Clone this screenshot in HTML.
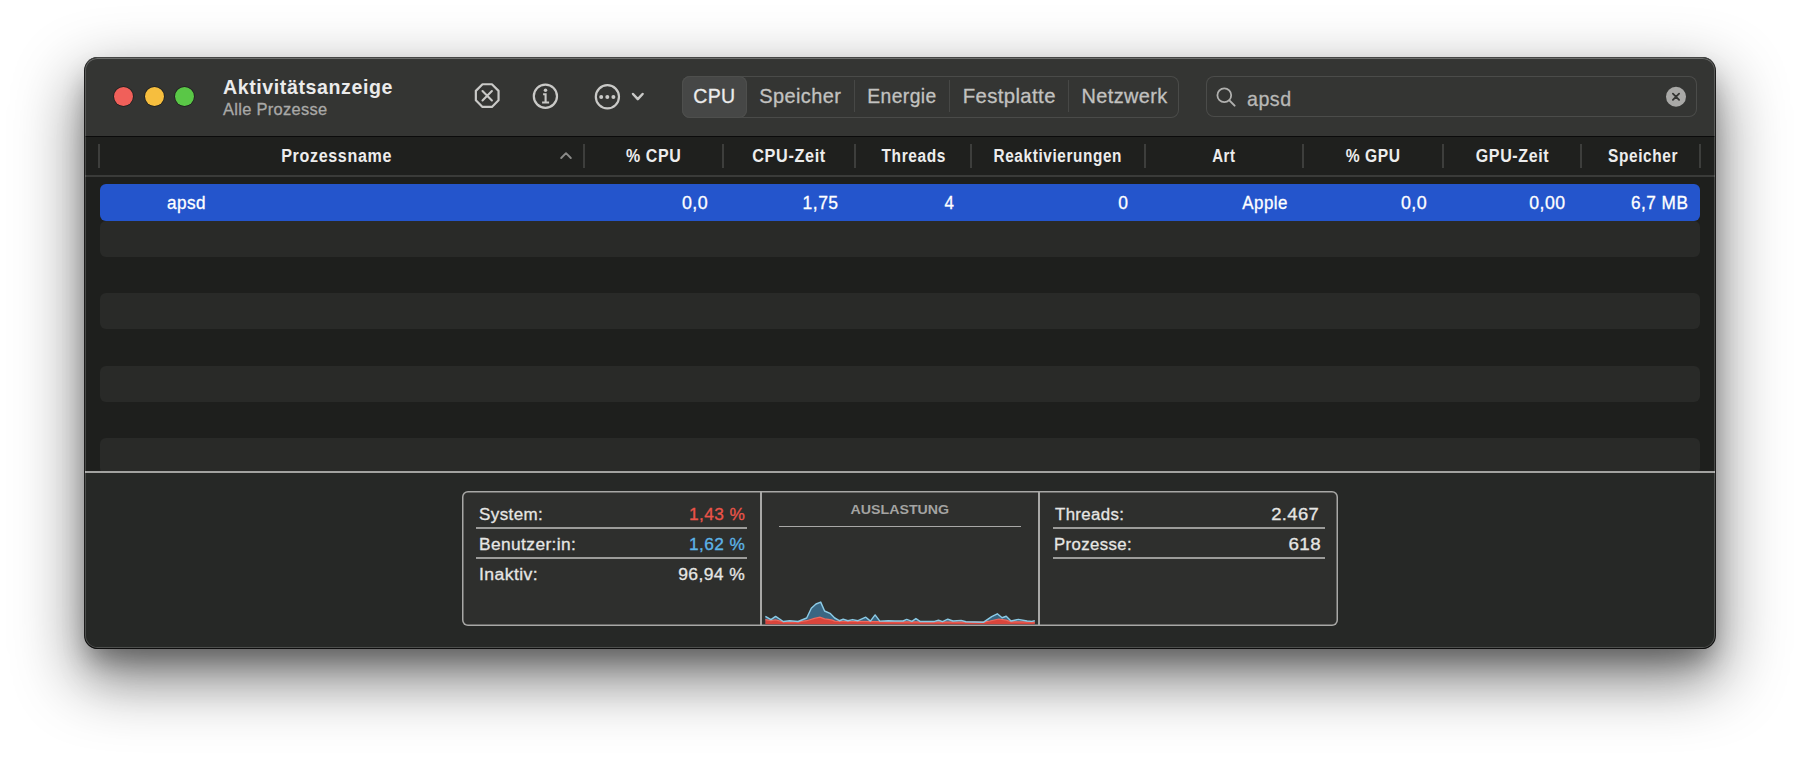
<!DOCTYPE html>
<html><head><meta charset="utf-8"><style>
*{box-sizing:border-box;margin:0;padding:0}
html,body{width:1800px;height:760px;overflow:hidden;background:#ffffff}
body{font-family:"Liberation Sans",sans-serif;position:relative}
.b,.t,svg{position:absolute}
.t{white-space:nowrap;line-height:1}
.r{-webkit-text-stroke:0.3px currentColor}
#win{position:absolute;left:85px;top:58px;width:1630px;height:590px;border-radius:12.5px;background:#262725;
 box-shadow:0 -1px 0 0 #454645, 0 1px 0 0 #0e0e0e, 0 0 0 1px #1c1c1c, 0 26px 64px 8px rgba(0,0,0,0.42), 0 14px 26px -4px rgba(0,0,0,0.3), 0 36px 44px -12px rgba(0,0,0,0.16);overflow:hidden}
#inner{left:0;top:0;width:1630px;height:590px;border-radius:12.5px;box-shadow:inset 0 0 0 1px rgba(255,255,255,0.19), inset 0 1px 0 rgba(255,255,255,0.12);}
</style></head><body>
<div id="win">
<div class="b" style="left:0.00px;top:0.00px;width:1630.00px;height:78.00px;background:#343533;"></div>
<div class="b" style="left:0.00px;top:78.00px;width:1630.00px;height:1.00px;background:#0b0b0b;"></div>
<div class="b" style="left:0.00px;top:79.00px;width:1630.00px;height:38.00px;background:#1f201e;"></div>
<div class="b" style="left:0.00px;top:117.00px;width:1630.00px;height:2.00px;background:#3a3b39;"></div>
<div class="b" style="left:0.00px;top:119.00px;width:1630.00px;height:294.00px;background:#1e1f1d;overflow:hidden"><div class="b" style="left:15.00px;top:7.00px;width:1600.00px;height:36.50px;background:#2455cc;border-radius:6px;"></div><div class="b" style="left:15.00px;top:43.50px;width:1600.00px;height:36.25px;background:#292a28;border-radius:6px;"></div><div class="b" style="left:15.00px;top:116.00px;width:1600.00px;height:36.25px;background:#292a28;border-radius:6px;"></div><div class="b" style="left:15.00px;top:188.50px;width:1600.00px;height:36.25px;background:#292a28;border-radius:6px;"></div><div class="b" style="left:15.00px;top:261.00px;width:1600.00px;height:36.25px;background:#292a28;border-radius:6px;"></div></div>
<div class="b" style="left:0.00px;top:413.00px;width:1630.00px;height:2.00px;background:#a2a2a0;"></div>
<div class="b" style="left:0.00px;top:415.00px;width:1630.00px;height:175.00px;background:#262826;"></div>
<div class="b" style="left:29.30px;top:29.30px;width:19px;height:19px;border-radius:50%;background:#f0605a;box-shadow:0 0 0 0.7px rgba(0,0,0,0.45)"></div>
<div class="b" style="left:59.50px;top:29.30px;width:19px;height:19px;border-radius:50%;background:#f6be3e;box-shadow:0 0 0 0.7px rgba(0,0,0,0.45)"></div>
<div class="b" style="left:89.50px;top:29.30px;width:19px;height:19px;border-radius:50%;background:#5ac747;box-shadow:0 0 0 0.7px rgba(0,0,0,0.45)"></div>
<div class="t" style="top:19px;font-size:20.4px;color:#ebebeb;font-weight:700;letter-spacing:0.6px;left:137.90px;transform-origin:0 50%;transform:scaleX(0.9614);">Aktivitätsanzeige</div>
<div class="t r" style="top:44px;font-size:16.6px;color:#a9a9a7;font-weight:400;letter-spacing:0.3px;left:137.90px;transform-origin:0 50%;transform:scaleX(0.9924);">Alle Prozesse</div>
<div class="b" style="left:13.00px;top:86.00px;width:2.00px;height:24.00px;background:#3d3e3c;"></div>
<div class="b" style="left:498.20px;top:86.00px;width:2.00px;height:24.00px;background:#3d3e3c;"></div>
<div class="b" style="left:637.20px;top:86.00px;width:2.00px;height:24.00px;background:#3d3e3c;"></div>
<div class="b" style="left:768.80px;top:86.00px;width:2.00px;height:24.00px;background:#3d3e3c;"></div>
<div class="b" style="left:885.20px;top:86.00px;width:2.00px;height:24.00px;background:#3d3e3c;"></div>
<div class="b" style="left:1058.50px;top:86.00px;width:2.00px;height:24.00px;background:#3d3e3c;"></div>
<div class="b" style="left:1217.20px;top:86.00px;width:2.00px;height:24.00px;background:#3d3e3c;"></div>
<div class="b" style="left:1356.70px;top:86.00px;width:2.00px;height:24.00px;background:#3d3e3c;"></div>
<div class="b" style="left:1495.30px;top:86.00px;width:2.00px;height:24.00px;background:#3d3e3c;"></div>
<div class="b" style="left:1613.90px;top:86.00px;width:2.00px;height:24.00px;background:#3d3e3c;"></div>
<div class="t" style="top:90px;font-size:17.6px;color:#ededed;font-weight:700;letter-spacing:0.7px;left:190.74px;width:123.14px;transform-origin:50% 50%;transform:scaleX(0.9151);">Prozessname</div>
<div class="t" style="top:90px;font-size:17.6px;color:#ededed;font-weight:700;letter-spacing:0.7px;left:538.30px;width:63.19px;transform-origin:50% 50%;transform:scaleX(0.9083);">% CPU</div>
<div class="t" style="top:90px;font-size:17.6px;color:#ededed;font-weight:700;letter-spacing:0.7px;left:664.02px;width:81.89px;transform-origin:50% 50%;transform:scaleX(0.9228);">CPU-Zeit</div>
<div class="t" style="top:90px;font-size:17.6px;color:#ededed;font-weight:700;letter-spacing:0.7px;left:791.82px;width:75.34px;transform-origin:50% 50%;transform:scaleX(0.8806);">Threads</div>
<div class="t" style="top:90px;font-size:17.6px;color:#ededed;font-weight:700;letter-spacing:0.7px;left:899.23px;width:149.39px;transform-origin:50% 50%;transform:scaleX(0.8724);">Reaktivierungen</div>
<div class="t" style="top:90px;font-size:17.6px;color:#ededed;font-weight:700;letter-spacing:0.7px;left:1125.46px;width:29.52px;transform-origin:50% 50%;transform:scaleX(0.8519);">Art</div>
<div class="t" style="top:90px;font-size:17.6px;color:#ededed;font-weight:700;letter-spacing:0.7px;left:1257.38px;width:64.17px;transform-origin:50% 50%;transform:scaleX(0.8869);">% GPU</div>
<div class="t" style="top:90px;font-size:17.6px;color:#ededed;font-weight:700;letter-spacing:0.7px;left:1386.96px;width:82.88px;transform-origin:50% 50%;transform:scaleX(0.9100);">GPU-Zeit</div>
<div class="t" style="top:90px;font-size:17.6px;color:#ededed;font-weight:700;letter-spacing:0.7px;left:1518.09px;width:81.92px;transform-origin:50% 50%;transform:scaleX(0.8772);">Speicher</div>
<div class="t r" style="top:137px;font-size:17.8px;color:#ffffff;font-weight:400;letter-spacing:0.5px;left:81.60px;transform-origin:0 50%;transform:scaleX(0.9641);">apsd</div>
<div class="t r" style="top:137px;font-size:17.8px;color:#ffffff;font-weight:400;letter-spacing:0.5px;right:1007.08px;transform-origin:100% 50%;transform:scaleX(1.0040);">0,0</div>
<div class="t r" style="top:137px;font-size:17.8px;color:#ffffff;font-weight:400;letter-spacing:0.5px;right:876.70px;transform-origin:100% 50%;transform:scaleX(0.9857);">1,75</div>
<div class="t r" style="top:137px;font-size:17.8px;color:#ffffff;font-weight:400;letter-spacing:0.5px;right:760.63px;transform-origin:100% 50%;transform:scaleX(0.9500);">4</div>
<div class="t r" style="top:137px;font-size:17.8px;color:#ffffff;font-weight:400;letter-spacing:0.5px;right:586.42px;transform-origin:100% 50%;transform:scaleX(0.9800);">0</div>
<div class="t r" style="top:137px;font-size:17.8px;color:#ffffff;font-weight:400;letter-spacing:0.5px;right:426.96px;transform-origin:100% 50%;transform:scaleX(0.9511);">Apple</div>
<div class="t r" style="top:137px;font-size:17.8px;color:#ffffff;font-weight:400;letter-spacing:0.5px;right:287.98px;transform-origin:100% 50%;transform:scaleX(1.0040);">0,0</div>
<div class="t r" style="top:137px;font-size:17.8px;color:#ffffff;font-weight:400;letter-spacing:0.5px;right:149.39px;transform-origin:100% 50%;transform:scaleX(0.9944);">0,00</div>
<div class="t r" style="top:137px;font-size:17.8px;color:#ffffff;font-weight:400;letter-spacing:0.5px;right:26.60px;transform-origin:100% 50%;transform:scaleX(0.9667);">6,7 MB</div>
<div class="b" style="left:596.80px;top:17.80px;width:497.60px;height:41.90px;background:#343533;border-radius:8px;box-shadow:inset 0 0 0 1px #4a4b49;"></div>
<div class="b" style="left:596.80px;top:17.80px;width:64.80px;height:41.90px;background:#464746;border-radius:8px;box-shadow:inset 0 0 0 1px #4e4f4d;"></div>
<div class="b" style="left:768.70px;top:22.00px;width:1.00px;height:32.00px;background:#474846;"></div>
<div class="b" style="left:864.00px;top:22.00px;width:1.00px;height:32.00px;background:#474846;"></div>
<div class="b" style="left:982.50px;top:22.00px;width:1.00px;height:32.00px;background:#474846;"></div>
<div class="t r" style="top:28px;font-size:20.6px;color:#ececec;font-weight:400;letter-spacing:0.4px;left:606.68px;width:46.69px;transform-origin:50% 50%;transform:scaleX(0.9476);">CPU</div>
<div class="t r" style="top:28px;font-size:20.6px;color:#c2c2c0;font-weight:400;letter-spacing:0.4px;left:673.46px;width:86.48px;transform-origin:50% 50%;transform:scaleX(0.9699);">Speicher</div>
<div class="t r" style="top:28px;font-size:20.6px;color:#c2c2c0;font-weight:400;letter-spacing:0.4px;left:779.66px;width:75.80px;transform-origin:50% 50%;transform:scaleX(0.9375);">Energie</div>
<div class="t r" style="top:28px;font-size:20.6px;color:#c2c2c0;font-weight:400;letter-spacing:0.4px;left:876.60px;width:96.44px;transform-origin:50% 50%;transform:scaleX(0.9870);">Festplatte</div>
<div class="t r" style="top:28px;font-size:20.6px;color:#c2c2c0;font-weight:400;letter-spacing:0.4px;left:994.77px;width:91.03px;transform-origin:50% 50%;transform:scaleX(0.9670);">Netzwerk</div>
<div class="b" style="left:1121.40px;top:18.00px;width:490.60px;height:41.10px;background:#343533;border-radius:8px;box-shadow:inset 0 0 0 1px #4b4c4a;"></div>
<div class="t r" style="top:31px;font-size:20.8px;color:#b8b8b6;font-weight:400;letter-spacing:0.5px;left:1161.55px;transform-origin:0 50%;transform:scaleX(0.9467);">apsd</div>
<div class="b" style="left:377.20px;top:433.30px;width:875.40px;height:135.20px;background:#2e2f2d;border-radius:6px;box-shadow:inset 0 0 0 1.5px #a8a8a6;"></div>
<div class="b" style="left:675.20px;top:433.30px;width:1.60px;height:135.20px;background:#a8a8a6;"></div>
<div class="b" style="left:953.20px;top:433.30px;width:1.60px;height:135.20px;background:#a8a8a6;"></div>
<div class="b" style="left:390.70px;top:469.00px;width:271.60px;height:2.00px;background:#9c9c9a;"></div>
<div class="b" style="left:967.90px;top:469.00px;width:272.20px;height:2.00px;background:#9c9c9a;"></div>
<div class="b" style="left:390.70px;top:499.00px;width:271.60px;height:2.00px;background:#9c9c9a;"></div>
<div class="b" style="left:967.90px;top:499.00px;width:272.20px;height:2.00px;background:#9c9c9a;"></div>
<div class="b" style="left:694.20px;top:468.00px;width:241.60px;height:1.40px;background:#a8a8a6;"></div>
<div class="t r" style="top:448px;font-size:17.3px;color:#e6e6e4;font-weight:400;letter-spacing:0.4px;left:394.32px;transform-origin:0 50%;transform:scaleX(0.9841);">System:</div>
<div class="t r" style="top:448px;font-size:17.3px;color:#ea5449;font-weight:400;letter-spacing:0.4px;right:969.70px;transform-origin:100% 50%;">1,43 %</div>
<div class="t r" style="top:478px;font-size:17.3px;color:#e6e6e4;font-weight:400;letter-spacing:0.4px;left:394.30px;transform-origin:0 50%;transform:scaleX(1.0032);">Benutzer:in:</div>
<div class="t r" style="top:478px;font-size:17.3px;color:#5db4e8;font-weight:400;letter-spacing:0.4px;right:969.70px;transform-origin:100% 50%;">1,62 %</div>
<div class="t r" style="top:508px;font-size:17.3px;color:#e6e6e4;font-weight:400;letter-spacing:0.4px;left:394.28px;transform-origin:0 50%;transform:scaleX(1.0200);">Inaktiv:</div>
<div class="t r" style="top:508px;font-size:17.3px;color:#e6e6e4;font-weight:400;letter-spacing:0.4px;right:969.68px;transform-origin:100% 50%;transform:scaleX(1.0121);">96,94 %</div>
<div class="t" style="top:445px;font-size:13.5px;color:#a4a4a2;font-weight:700;left:768.37px;width:95.75px;transform-origin:50% 50%;transform:scaleX(1.0527);">AUSLASTUNG</div>
<div class="t r" style="top:448px;font-size:17.3px;color:#e6e6e4;font-weight:400;letter-spacing:0.4px;left:970.30px;transform-origin:0 50%;transform:scaleX(0.9714);">Threads:</div>
<div class="t r" style="top:448px;font-size:17.3px;color:#e6e6e4;font-weight:400;letter-spacing:0.4px;right:395.37px;transform-origin:100% 50%;transform:scaleX(1.0628);">2.467</div>
<div class="t r" style="top:478px;font-size:17.3px;color:#e6e6e4;font-weight:400;letter-spacing:0.4px;left:968.73px;transform-origin:0 50%;transform:scaleX(0.9705);">Prozesse:</div>
<div class="t r" style="top:478px;font-size:17.3px;color:#e6e6e4;font-weight:400;letter-spacing:0.4px;right:394.26px;transform-origin:100% 50%;transform:scaleX(1.0857);">618</div>
<svg style="left:0;top:0" width="1630" height="590" viewBox="85 58 1630 590"><polygon points="491.90,84.25 498.55,90.90 498.55,100.30 491.90,106.95 482.50,106.95 475.85,100.30 475.85,90.90 482.50,84.25" fill="none" stroke="#c9c9c7" stroke-width="2.2" stroke-linejoin="round"/><path d="M482.5 91.1 L491.9 100.5 M491.9 91.1 L482.5 100.5" stroke="#c9c9c7" stroke-width="2.1" stroke-linecap="round"/><circle cx="545.4" cy="96.2" r="11.6" fill="none" stroke="#c9c9c7" stroke-width="2.2"/><circle cx="545.5" cy="90.2" r="1.75" fill="#c9c9c7"/><path d="M543.1 94.2 H545.6 V102.4 M542.1 102.5 H549.1" fill="none" stroke="#c9c9c7" stroke-width="2.1"/><circle cx="607.4" cy="96.8" r="11.6" fill="none" stroke="#c9c9c7" stroke-width="2.2"/><circle cx="601.20" cy="96.9" r="2.0" fill="#c9c9c7"/><circle cx="607.30" cy="96.9" r="2.0" fill="#c9c9c7"/><circle cx="613.40" cy="96.9" r="2.0" fill="#c9c9c7"/><path d="M633 94 L637.8 99.2 L642.6 94" fill="none" stroke="#c9c9c7" stroke-width="2.5" stroke-linecap="round" stroke-linejoin="round"/><path d="M561.2 158 L566 153.2 L570.8 158" fill="none" stroke="#8a8a88" stroke-width="1.9" stroke-linecap="round" stroke-linejoin="round"/><circle cx="1224.3" cy="95.2" r="6.9" fill="none" stroke="#b0b0ae" stroke-width="1.8"/><path d="M1229.4 100.4 L1234.6 105.6" stroke="#b0b0ae" stroke-width="2" stroke-linecap="round"/><circle cx="1676" cy="96.7" r="10" fill="#a9a9a7"/><path d="M1672.9 93.6 L1679.1 99.8 M1679.1 93.6 L1672.9 99.8" stroke="#343533" stroke-width="1.8" stroke-linecap="round"/><polygon points="765.4,616.4 770.9,619.6 775.6,616.4 783.3,621.5 789.6,620.7 798.1,621.5 806.7,618.0 811.3,608.3 816.0,604.0 820.7,602.1 824.6,611.0 830.0,613.3 834.7,618.0 839.3,620.7 843.2,619.2 847.9,620.7 852.5,619.6 858.0,620.7 865.8,617.2 870.4,621.1 875.1,614.9 879.8,621.1 888.3,620.7 895.0,621.0 903.1,621.0 906.7,619.4 911.9,621.4 915.9,618.6 920.0,621.4 927.2,621.4 934.5,621.4 938.5,620.2 942.5,621.6 947.8,619.2 953.0,621.0 961.1,620.4 965.9,621.8 983.6,622.2 991.7,616.6 997.3,613.8 1002.1,617.8 1006.2,616.2 1011.0,621.0 1018.2,619.4 1027.1,621.0 1031.9,621.4 1034.8,620.6 1034.8,624.3 765.4,624.3" fill="#3a6682" /><polygon points="765.4,619.6 770.9,620.7 775.6,619.9 783.3,621.9 798.1,621.9 806.7,620.7 814.4,618.4 819.9,617.2 824.6,618.8 831.6,619.9 834.7,621.1 900.0,621.8 983.6,622.2 990.0,621.0 998.9,619.0 1006.2,620.2 1011.0,621.8 1034.8,622.0 1034.8,624.3 765.4,624.3" fill="#d9453c" /><polyline points="765.4,619.6 770.9,620.7 775.6,619.9 783.3,621.9 798.1,621.9 806.7,620.7 814.4,618.4 819.9,617.2 824.6,618.8 831.6,619.9 834.7,621.1 900.0,621.8 983.6,622.2 990.0,621.0 998.9,619.0 1006.2,620.2 1011.0,621.8 1034.8,622.0" fill="none" stroke="#ee6a5e" stroke-width="1.2"/><polyline points="765.4,616.4 770.9,619.6 775.6,616.4 783.3,621.5 789.6,620.7 798.1,621.5 806.7,618.0 811.3,608.3 816.0,604.0 820.7,602.1 824.6,611.0 830.0,613.3 834.7,618.0 839.3,620.7 843.2,619.2 847.9,620.7 852.5,619.6 858.0,620.7 865.8,617.2 870.4,621.1 875.1,614.9 879.8,621.1 888.3,620.7 895.0,621.0 903.1,621.0 906.7,619.4 911.9,621.4 915.9,618.6 920.0,621.4 927.2,621.4 934.5,621.4 938.5,620.2 942.5,621.6 947.8,619.2 953.0,621.0 961.1,620.4 965.9,621.8 983.6,622.2 991.7,616.6 997.3,613.8 1002.1,617.8 1006.2,616.2 1011.0,621.0 1018.2,619.4 1027.1,621.0 1031.9,621.4 1034.8,620.6" fill="none" stroke="#8ccbe6" stroke-width="1.45" stroke-linejoin="round"/></svg>
<div id="inner" class="b"></div>
</div>
</body></html>
